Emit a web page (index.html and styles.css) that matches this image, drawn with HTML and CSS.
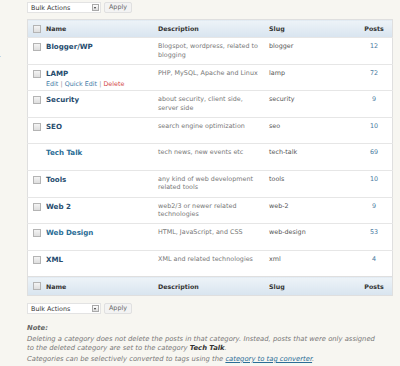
FILE: index.html
```html
<!DOCTYPE html>
<html lang="en">
<head>
  <meta charset="UTF-8">
  <title>Categories</title>
  <link rel="stylesheet" href="styles.css">
</head>
<body>
  <div class="layout">
    <div class="sidebar"><span class="menu-item">Writer</span></div>

    <div class="main">
      <div class="tablenav">
        <div class="select"><span>Bulk Actions</span><span class="arrow"></span></div>
        <div class="button">Apply</div>
      </div>

      <table class="widefat">
        <thead>
          <tr>
            <th class="cb"><span class="check"></span></th>
            <th class="col-name">Name</th>
            <th class="col-desc">Description</th>
            <th class="col-slug">Slug</th>
            <th class="col-posts">Posts</th>
          </tr>
        </thead>
        <tbody>
          <tr>
            <td class="cb"><span class="check"></span></td>
            <td><a class="row-title">Blogger/WP</a><div class="row-actions">&nbsp;</div></td>
            <td class="desc">Blogspot, wordpress, related to blogging</td>
            <td class="slug">blogger</td>
            <td class="posts">12</td>
          </tr>
          <tr>
            <td class="cb"><span class="check"></span></td>
            <td><a class="row-title">LAMP</a>
              <div class="row-actions"><a>Edit</a> <span class="sep">|</span> <a>Quick&nbsp;Edit</a> <span class="sep">|</span> <a class="delete">Delete</a></div>
            </td>
            <td class="desc">PHP, MySQL, Apache and Linux</td>
            <td class="slug">lamp</td>
            <td class="posts">72</td>
          </tr>
          <tr>
            <td class="cb"><span class="check"></span></td>
            <td><a class="row-title">Security</a><div class="row-actions">&nbsp;</div></td>
            <td class="desc">about security, client side, server side</td>
            <td class="slug">security</td>
            <td class="posts">9</td>
          </tr>
          <tr>
            <td class="cb"><span class="check"></span></td>
            <td><a class="row-title">SEO</a><div class="row-actions">&nbsp;</div></td>
            <td class="desc">search engine optimization</td>
            <td class="slug">seo</td>
            <td class="posts">10</td>
          </tr>
          <tr>
            <td class="cb"></td>
            <td><a class="row-title fresh">Tech Talk</a><div class="row-actions">&nbsp;</div></td>
            <td class="desc">tech news, new events etc</td>
            <td class="slug">tech-talk</td>
            <td class="posts">69</td>
          </tr>
          <tr>
            <td class="cb"><span class="check"></span></td>
            <td><a class="row-title">Tools</a><div class="row-actions">&nbsp;</div></td>
            <td class="desc">any kind of web development related tools</td>
            <td class="slug">tools</td>
            <td class="posts">10</td>
          </tr>
          <tr>
            <td class="cb"><span class="check"></span></td>
            <td><a class="row-title">Web 2</a><div class="row-actions">&nbsp;</div></td>
            <td class="desc">web2/3 or newer related technologies</td>
            <td class="slug">web-2</td>
            <td class="posts">9</td>
          </tr>
          <tr>
            <td class="cb"><span class="check"></span></td>
            <td><a class="row-title fresh">Web Design</a><div class="row-actions">&nbsp;</div></td>
            <td class="desc">HTML, JavaScript, and CSS</td>
            <td class="slug">web-design</td>
            <td class="posts">53</td>
          </tr>
          <tr>
            <td class="cb"><span class="check"></span></td>
            <td><a class="row-title">XML</a><div class="row-actions">&nbsp;</div></td>
            <td class="desc">XML and related technologies</td>
            <td class="slug">xml</td>
            <td class="posts">4</td>
          </tr>
        </tbody>
        <tfoot>
          <tr>
            <th class="cb"><span class="check"></span></th>
            <th class="col-name">Name</th>
            <th class="col-desc">Description</th>
            <th class="col-slug">Slug</th>
            <th class="col-posts">Posts</th>
          </tr>
        </tfoot>
      </table>

      <div class="tablenav bottom">
        <div class="select"><span>Bulk Actions</span><span class="arrow"></span></div>
        <div class="button">Apply</div>
      </div>

      <div class="note">
        <p class="note-title">Note:</p>
        <p>Deleting a category does not delete the posts in that category. Instead, posts that were only assigned to the deleted category are set to the category <strong>Tech Talk</strong>.</p>
        <p>Categories can be selectively converted to tags using the <a>category to tag converter</a>.</p>
      </div>
    </div>
  </div>
</body>
</html>
```

FILE: styles.css
```css
body { margin: 0; background: #f7f6f1; font-family: "DejaVu Sans", Verdana, sans-serif; font-size: 6.4px; color: #333; }
a { cursor: pointer; }

.layout { display: flex; }
.sidebar { width: 27px; flex-shrink: 0; overflow: hidden; padding-top: 54px; white-space: nowrap; }
.menu-item { display: block; margin-left: -19px; color: #555; }

.main { width: 364px; }

.tablenav { height: 19px; display: flex; align-items: flex-start; gap: 3px; padding-top: 2px; box-sizing: border-box; }
.tablenav.bottom { margin-top: 5px; }
.select { width: 74px; height: 11px; box-sizing: border-box; background: #fff; border: 1px solid #e3e3e3; display: flex; align-items: center; justify-content: space-between; padding: 0 1px 0 3px; color: #333; }
.arrow { width: 7px; height: 7px; box-sizing: border-box; border: 1px solid #aaa; background: #eee linear-gradient(#fff, #ddd); position: relative; }
.arrow::after { content: ""; position: absolute; left: 1px; top: 2px; border-left: 1.5px solid transparent; border-right: 1.5px solid transparent; border-top: 2px solid #333; }
.button { height: 11px; box-sizing: border-box; width: 28px; text-align: center; line-height: 9px; background: #f3f3f3; border: 1px solid #e0e0e0; border-radius: 2px; color: #666; }

.widefat { width: 364px; border-collapse: collapse; table-layout: fixed; background: #fff; border: 1px solid #dfdfdf; }
.widefat th { height: 17px; padding: 0 4px; text-align: left; font-weight: bold; font-size: 6.3px; color: #333; background: linear-gradient(#edf3f8, #d8e4ef); vertical-align: middle; }
.widefat tfoot th { height: 18px; border-top: 1px solid #dfdfdf; }
.widefat td { height: 21.6px; padding: 4px 4px 0; vertical-align: top; border-top: 1px solid #e6e6e6; line-height: 8.5px; }
.widefat .cb { width: 6px; padding-left: 5px; padding-right: 3px; }
.col-name { width: 104px; }
.col-desc { width: 103px; }
.col-slug { width: 83px; }
.widefat .col-posts { width: 28px; text-align: center; }

.check { display: block; width: 8px; height: 8px; box-sizing: border-box; border: 1px solid #b4b4b4; background: linear-gradient(#f4f4f4, #dedede); }
.widefat td .check { margin-top: 1px; }

.row-title { display: block; font-weight: bold; font-size: 7.1px; line-height: 9px; color: #264c6e; }
.row-title.fresh { color: #2a6d96; }
.row-actions { margin-top: 2px; color: #999; white-space: nowrap; }
.row-actions a { color: #3f7ba6; }
.row-actions .delete { color: #d34a4a; }
.desc { color: #777; }
.slug { color: #555; }
.widefat .posts { text-align: center; color: #4a7aa0; }

.note { padding-top: 4px; color: #777; font-style: italic; font-size: 6.8px; }
.note p { margin: 0 0 2.5px; line-height: 8.5px; width: 352px; }
.note .note-title { font-weight: bold; color: #666; }
.note strong { color: #333; }
.note a { color: #2a6d96; text-decoration: underline; }
```
